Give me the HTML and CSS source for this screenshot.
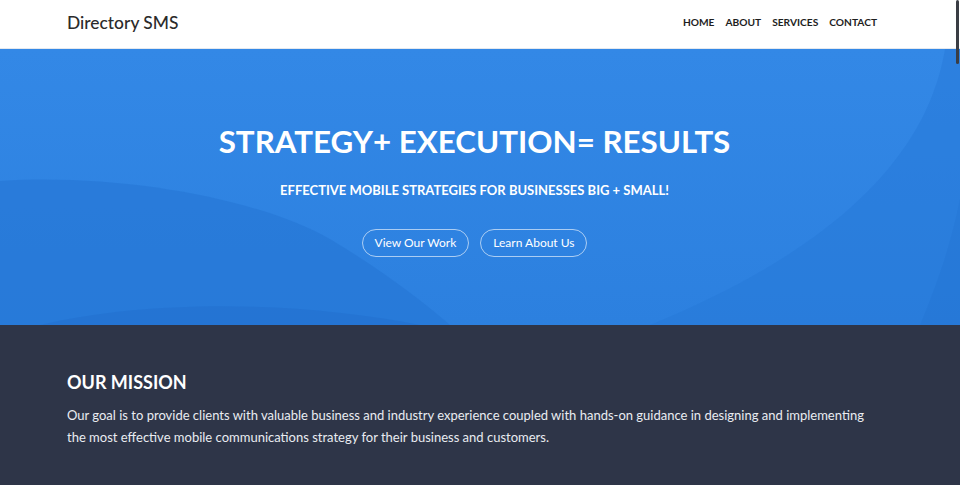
FILE: index.html
```html
<!DOCTYPE html>
<html lang="en">
<head>
    <meta charset="UTF-8">
    <meta name="viewport" content="width=device-width, initial-scale=1.0">
    <title>Directory SMS</title>
    <link rel="stylesheet" href="styles.css">
</head>
<body>
    <!-- Top navigation -->
    <header class="site-header">
        <div class="container header-inner">
            <a class="brand" href="#">Directory SMS</a>
            <nav class="main-nav">
                <a href="#">Home</a>
                <a href="#">About</a>
                <a href="#">Services</a>
                <a href="#">Contact</a>
            </nav>
        </div>
    </header>

    <!-- Hero -->
    <section class="hero">
        <svg class="hero-bg" viewBox="0 0 960 276" preserveAspectRatio="none" aria-hidden="true">
            <path d="M0 132 C120 124 260 150 330 190 C380 220 420 250 450 276 L0 276 Z" fill="#2474d4" opacity="0.55"/>
            <path d="M40 276 C150 250 300 252 420 276 Z" fill="#1f6bc9" opacity="0.35"/>
            <path d="M945 0 C930 90 860 190 650 276 L960 276 L960 0 Z" fill="#2677d8" opacity="0.45"/>
            <path d="M960 150 C950 200 935 240 920 276 L960 276 Z" fill="#2272d2" opacity="0.35"/>
        </svg>
        <div class="container hero-inner">
            <h1>Strategy+ Execution= Results</h1>
            <p class="tagline">Effective mobile strategies for businesses big + small!</p>
            <div class="hero-buttons">
                <a class="pill-button" href="#">View Our Work</a>
                <a class="pill-button" href="#">Learn About Us</a>
            </div>
        </div>
    </section>

    <!-- Mission -->
    <section class="mission">
        <div class="container">
            <h2>Our Mission</h2>
            <p>Our goal is to provide clients with valuable business and industry experience coupled with hands-on guidance in designing and implementing the most effective mobile communications strategy for their business and customers.</p>
        </div>
    </section>

    <div class="scroll-thumb"></div>
</body>
</html>
```

FILE: styles.css
```css
/* Base page */
html, body {
    margin: 0;
    padding: 0;
    font-family: Lato, "Open Sans", sans-serif;
    background-color: #2e3548;
}

a {
    text-decoration: none;
}

.container {
    width: 810px;
    margin-left: 67px;
}

/* Header */
.site-header {
    background-color: #fff;
    height: 48px;
    border-bottom: 1px solid #e4e8ee;
}

.header-inner {
    display: flex;
    justify-content: space-between;
    align-items: center;
    height: 100%;
}

.brand {
    color: #2b2b2b;
    font-size: 17.4px;
    font-weight: 500;
    padding-bottom: 4px;
}

.main-nav {
    display: flex;
    gap: 11px;
    padding-bottom: 4px;
}

.main-nav a {
    color: #1e1e1e;
    font-size: 10.2px;
    font-weight: 700;
    text-transform: uppercase;
}

/* Hero */
.hero {
    position: relative;
    height: 276px;
    overflow: hidden;
    background: linear-gradient(180deg, #3388e6 0%, #2c80df 100%);
}

.hero-bg {
    position: absolute;
    top: 0;
    left: 0;
    width: 100%;
    height: 100%;
}

.hero-inner {
    position: relative;
    width: 815px;
    display: flex;
    flex-direction: column;
    align-items: center;
    padding-top: 73px;
    color: #fff;
}

.hero h1 {
    margin: 0;
    font-size: 31.3px;
    font-weight: 700;
    line-height: 38px;
    text-transform: uppercase;
}

.tagline {
    margin: 22px 0 0;
    font-size: 13px;
    font-weight: 700;
    text-transform: uppercase;
}

.hero-buttons {
    display: flex;
    gap: 11px;
    margin-top: 31px;
}

.pill-button {
    color: #fff;
    font-size: 12px;
    height: 26px;
    line-height: 26px;
    padding: 0 12px;
    border: 1px solid rgba(255, 255, 255, 0.6);
    border-radius: 15px;
}

/* Mission */
.mission {
    color: #fff;
    padding-top: 46px;
    padding-bottom: 40px;
}

.mission h2 {
    margin: 0;
    font-size: 18px;
    font-weight: 700;
    text-transform: uppercase;
}

.mission p {
    margin: 11px 0 0;
    font-size: 13px;
    line-height: 22px;
    color: #e9ecf1;
}

/* Overlay scrollbar thumb seen at the right edge */
.scroll-thumb {
    position: fixed;
    top: 0;
    right: 1px;
    width: 3px;
    height: 64px;
    background-color: #3a3d44;
    border-radius: 2px;
}
```
